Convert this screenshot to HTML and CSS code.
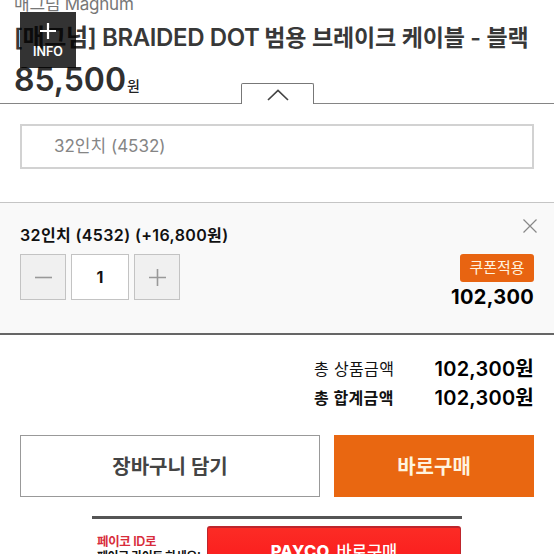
FILE: index.html
```
<!DOCTYPE html>
<html lang="ko">
<head>
<meta charset="utf-8">
<title>매그넘 BRAIDED DOT</title>
<link rel="stylesheet" href="styles.css">
</head>
<body>
<main class="page">
  <header class="product">
    <div class="brand">매그넘 Magnum</div>
    <h1 class="title">[매그넘] BRAIDED DOT <span class="ko">범용 브레이크 케이블 - 블랙</span></h1>
    <div class="price">85,500<span class="won">원</span></div>
    <button class="info"><svg width="18" height="18" viewBox="0 0 18 18"><path d="M9 1v16M1 9h16"/></svg><span>INFO</span></button>
    <button class="tab"><svg width="22" height="12" viewBox="0 0 22 12"><path d="M1 11L11 1.5L21 11"/></svg></button>
  </header>
  <section class="choose">
    <div class="select">32인치 (4532)</div>
  </section>
  <section class="option">
    <div class="left">
      <div class="name">32인치 (4532) (+16,800원)</div>
      <div class="stepper">
        <button class="step"><svg width="19" height="19" viewBox="0 0 19 19"><path d="M1 9.500h17"/></svg></button>
        <div class="count">1</div>
        <button class="step"><svg width="19" height="19" viewBox="0 0 19 19"><path d="M1 9.500h17M9.500 1v17"/></svg></button>
      </div>
    </div>
    <div class="right">
      <svg class="close" width="14" height="14" viewBox="0 0 14 14"><path d="M.5 .5l13 13M13.500 .5l-13 13"/></svg>
      <span class="coupon">쿠폰적용</span>
      <strong class="amount">102,300</strong>
    </div>
  </section>
  <section class="totals">
    <span class="label">총 상품금액</span><strong class="sum">102,300원</strong>
    <span class="label bold">총 합계금액</span><strong class="sum">102,300원</strong>
  </section>
  <section class="actions">
    <button class="cart">장바구니 담기</button>
    <button class="buy">바로구매</button>
  </section>
  <section class="payco">
    <div class="pitch"><span class="red">페이코 ID로</span><span class="black">페이코 라이트 하세요!</span></div>
    <button class="paybtn"><b>PAYCO</b><span>바로구매</span></button>
  </section>
</main>
</body>
</html>
```
FILE: styles.css
```
* { box-sizing: border-box; }
body { margin: 0; background: #fff; font-family: Inter, "Noto Sans CJK KR", sans-serif; color: #111; }
button { font: inherit; padding: 0; border: 0; border-radius: 0; background: none; }
svg { display: block; fill: none; }
.page { width: 554px; height: 554px; overflow: hidden; white-space: nowrap; }
.product { position: relative; height: 104px; padding-left: 14px; border-bottom: 1px solid #858585; }
.brand { height: 22px; line-height: 22px; margin-bottom: -2px; position: relative; top: -7px; font-size: 17px; letter-spacing: -.25px; color: #777; }
.title { margin: 0; height: 36px; line-height: 36px; font-size: 24px; font-weight: 600; color: #383838; letter-spacing: -.37px; }
.title .ko { font-size: 23px; letter-spacing: -.15px; margin-left: -1px; }
.price { height: 40px; line-height: 40px; margin-top: 4px; font-size: 32px; font-weight: 600; color: #303030; }
.won { font-size: 14px; font-weight: 500; color: #222; margin-left: 1px; }
.info { position: absolute; left: 20px; top: 12px; width: 56px; height: 56px; background: rgba(0,0,0,.8); color: #fff; display: flex; flex-direction: column; align-items: center; padding-top: 10px; gap: 3px; font-size: 12.5px; line-height: 18px; font-weight: 600; }
.info svg { stroke: #fff; stroke-width: 2.2; }
.tab { position: absolute; left: 241px; top: 83px; width: 73px; height: 21px; background: #fff; border: 1px solid #777; border-bottom: 0; border-radius: 2px 2px 0 0; display: grid; place-items: center; }
.tab svg { stroke: #444; stroke-width: 1.7; margin-top: 2px; }
.choose { height: 98px; padding: 20px 20px 0; }
.select { height: 45px; border: 2px solid #d2d2d2; padding-left: 32px; line-height: 40px; font-size: 17px; color: #858585; }
.option { height: 133px; background: #f9f9f9; border-top: 1px solid #c5c5c5; border-bottom: 2px solid #666; display: flex; justify-content: space-between; padding: 0 20px; }
.name { margin-top: 20px; height: 24px; line-height: 24px; font-size: 16px; font-weight: 600; letter-spacing: .37px; }
.stepper { display: flex; gap: 5px; margin-top: 7px; }
.step, .count { width: 46px; height: 46px; border: 1px solid #c3c3c3; display: grid; place-items: center; background: #f0f0f0; }
.step svg { stroke: #999; stroke-width: 1.6; }
.count { width: 58px; background: #fff; font-size: 16px; font-weight: 700; }
.right { display: flex; flex-direction: column; align-items: flex-end; }
.close { margin: 16px -3px 0 0; stroke: #888; stroke-width: 1.2; }
.coupon { margin-top: 21px; width: 74px; height: 28px; border-radius: 3px; background: #e86411; color: #fff3df; font-size: 15px; line-height: 27px; text-align: center; }
.amount { margin-top: 3px; line-height: 24px; font-size: 20px; font-weight: 650; letter-spacing: .3px; color: #000; }
.totals { height: 100px; padding: 20px 20px 0 0; display: grid; grid-template-columns: 80px 101px; grid-auto-rows: 29px; column-gap: 39px; justify-content: end; line-height: 29px; }
.label { font-size: 16px; letter-spacing: .35px; }
.label.bold { font-weight: 600; }
.sum { font-size: 20px; font-weight: 600; letter-spacing: .25px; text-align: right; color: #000; }
.actions { display: flex; gap: 14px; padding: 0 20px; height: 62px; }
.cart, .buy { padding-bottom: 2px; font-size: 20px; font-weight: 600; }
.cart { width: 300px; border: 1px solid #999; color: #444; }
.buy { flex: 1; background: #e96711; color: #fff3df; }
.payco { width: 370px; margin: 19px 0 0 92px; height: 38px; border-top: 3px solid #555; display: flex; }
.pitch { width: 115px; padding: 15px 0 0 5px; display: flex; flex-direction: column; font-size: 12px; font-weight: 600; line-height: 15px; letter-spacing: -.5px; }
.red { color: #d82d3b; font-size: 12.5px; letter-spacing: -.35px; }
.paybtn { margin-top: 7px; width: 254px; height: 48px; border-radius: 3px 3px 0 0; border: 1px solid #bd252c; border-top-width: 2px; background: linear-gradient(#fc2b25, #fa191b); color: #fff; display: flex; justify-content: center; align-items: center; gap: 7px; font-size: 16.5px; }
.paybtn b { font-weight: 800; letter-spacing: .3px; }
.paybtn span { font-weight: 500; }
```
